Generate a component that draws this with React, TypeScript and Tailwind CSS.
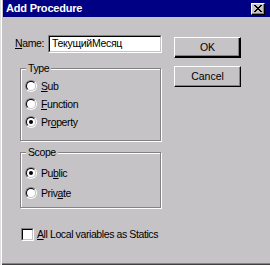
import React from "react";

const FONT = { fontFamily: '"Liberation Sans", Arial, sans-serif' };

function Radio({ checked }: { checked?: boolean }) {
  return (
    <span className="relative w-[12px] h-[12px] shrink-0 rounded-full border border-t-[#848284] border-l-[#848284] border-b-white border-r-white">
      <span className="absolute inset-0 rounded-full bg-white border border-t-black border-l-black border-b-[#c6c3c6] border-r-[#c6c3c6] flex items-center justify-center">
        {checked && <span className="w-[4px] h-[4px] rounded-full bg-black" />}
      </span>
    </span>
  );
}

function Option({ label, u, checked, h }: { label: string; u: number; checked?: boolean; h: string }) {
  return (
    <div className={`flex items-center gap-[4px] ${h}`}>
      <Radio checked={checked} />
      <span className="text-[10.5px] tracking-[-0.4px] text-black leading-none whitespace-nowrap">
        {label.slice(0, u)}
        <span className="underline">{label[u]}</span>
        {label.slice(u + 1)}
      </span>
    </div>
  );
}

function Group({ title, className, children }: { title: string; className: string; children: React.ReactNode }) {
  return (
    <div className={`relative ml-[5px] w-[141px] border border-[#848284] shadow-[inset_1px_1px_0_#fff,1px_1px_0_#fff] ${className}`}>
      <span className="absolute -top-[7px] left-[5px] px-[2px] bg-[#c6c3c6] text-[10.5px] tracking-[-0.4px] leading-[12px] text-black">
        {title}
      </span>
      {children}
    </div>
  );
}

export default function App() {
  return (
    <div
      style={FONT}
      className="w-[270px] h-[265px] bg-[#c6c3c6] flex flex-col overflow-hidden shadow-[inset_1px_0_0_#dfdfdf,inset_2px_0_0_#fff,inset_0_-1px_0_#424142,inset_0_-2px_0_#848284]"
    >
      {/* Title bar */}
      <div className="h-[17px] ml-[3px] bg-[#000084] flex items-center justify-between pl-[3px] pr-[5px] shrink-0">
        <span className="text-white font-bold text-[11px] leading-none tracking-[-0.2px]">Add Procedure</span>
        <button className="w-[14px] h-[12px] bg-[#c6c3c6] border border-t-white border-l-white border-b-black border-r-black shadow-[inset_-1px_-1px_0_#848284] flex items-center justify-center">
          <svg width="8" height="7" viewBox="0 0 8 7" shapeRendering="crispEdges">
            <path d="M0 0h2v1H0zM6 0h2v1H6zM1 1h2v1H1zM5 1h2v1H5zM2 2h4v1H2zM3 3h2v1H3zM2 4h4v1H2zM1 5h2v1H1zM5 5h2v1H5zM0 6h2v1H0zM6 6h2v1H6z" fill="#000" />
          </svg>
        </button>
      </div>

      {/* Body */}
      <div className="flex pl-[15px]">
        <div className="w-[147px] flex flex-col">
          <div className="mt-[18px] flex items-center h-[18px]">
            <span className="w-[33px] text-[10.5px] tracking-[-0.4px] text-black whitespace-nowrap">
              <span className="underline">N</span>ame:
            </span>
            <div className="w-[114px] h-[18px] border border-t-[#848284] border-l-[#848284] border-b-white border-r-white">
              <div className="h-full bg-white border border-t-black border-l-black border-b-[#c6c3c6] border-r-[#c6c3c6] flex items-center pl-[2px] text-[10.5px] tracking-[-0.3px] text-black whitespace-nowrap">
                ТекущийМесяц
              </div>
            </div>
          </div>

          <Group title="Type" className="mt-[15px] h-[73px] pt-[8px] pl-[4px]">
            <Option label="Sub" u={0} h="h-[18px]" />
            <Option label="Function" u={0} h="h-[18px]" />
            <Option label="Property" u={2} checked h="h-[18px]" />
          </Group>

          <Group title="Scope" className="mt-[11px] h-[56px] pt-[10px] pl-[4px]">
            <Option label="Public" u={2} checked h="h-[20px]" />
            <Option label="Private" u={4} h="h-[20px]" />
          </Group>

          <div className="mt-[20px] ml-[6px] flex items-center gap-[3px]">
            <span className="w-[13px] h-[13px] shrink-0 border border-t-[#848284] border-l-[#848284] border-b-white border-r-white">
              <span className="block w-full h-full bg-white border border-t-black border-l-black border-b-[#c6c3c6] border-r-[#c6c3c6]" />
            </span>
            <span className="text-[10.5px] tracking-[-0.4px] text-black leading-none whitespace-nowrap">
              <span className="underline">A</span>ll Local variables as Statics
            </span>
          </div>
        </div>

        <div className="ml-[12px] mt-[20px] flex flex-col gap-[8px]">
          <button className="w-[67px] h-[21px] bg-[#c6c3c6] border border-t-white border-l-white border-b-black border-r-black shadow-[inset_-1px_-1px_0_#000,inset_-2px_-2px_0_#848284] text-[10.5px] text-black">
            OK
          </button>
          <button className="w-[67px] h-[21px] bg-[#c6c3c6] border border-t-white border-l-white border-b-black border-r-black shadow-[inset_-1px_-1px_0_#848284] text-[10.5px] text-black">
            Cancel
          </button>
        </div>
      </div>
    </div>
  );
}
